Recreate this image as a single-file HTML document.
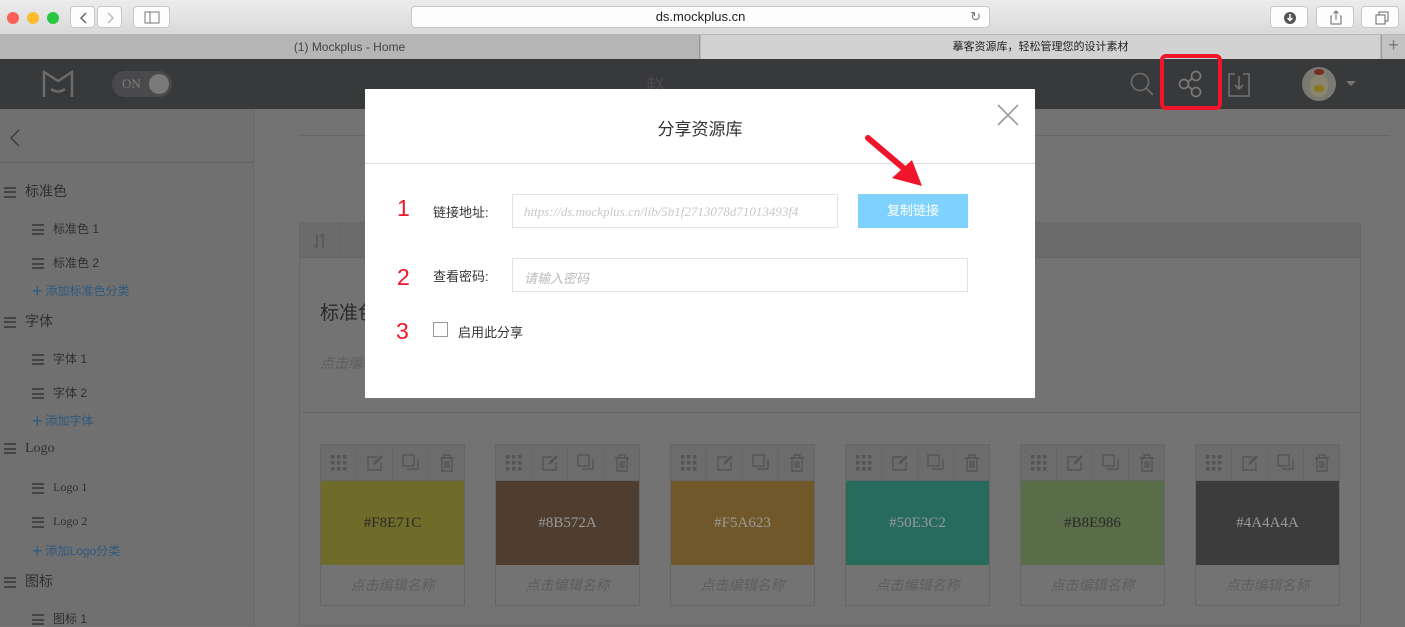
<!DOCTYPE html>
<html><head><meta charset="utf-8"><style>
*{margin:0;padding:0;box-sizing:border-box}
body{width:1405px;height:626px;overflow:hidden;position:relative;background:#737373;font-family:"Liberation Serif","Noto Serif CJK SC",serif}
.abs{position:absolute}
.cjk{font-family:"Liberation Sans","Noto Sans CJK SC",sans-serif}
.chrome{left:0;top:0;width:1405px;height:35px;background:linear-gradient(#ececec,#d9d9d9);border-bottom:1px solid #b8b8b8}
.btn{background:#fdfdfd;border:1px solid #c8c8c8;border-radius:4px;height:22px;top:6px}
.tabs{left:0;top:35px;width:1405px;height:24px;background:#b9b9b9}
.hdr{left:0;top:59px;width:1405px;height:50px;background:#38393b}
.side{left:0;top:109px;width:254px;height:517px;background:#707070;border-right:1px solid #666}
.s1{font-size:14px;color:#303030}
.s2{font-size:12px;color:#303030}
.add{font-size:12px;color:#2e5a80}
.ham{display:inline-block;width:12px;height:11px;border-top:2px solid #444;border-bottom:2px solid #444;position:relative;vertical-align:middle;margin-right:9px}
.ham:after{content:"";position:absolute;left:0;right:0;top:2.5px;border-top:2px solid #444}
.card{width:145px;height:162px;border:1px solid #666;background:#737373}
.ctb{height:36px;background:#6c6c6c;border-bottom:1px solid #666;display:flex}
.ctb div{flex:1;border-right:1px solid #666;display:flex;align-items:center;justify-content:center}
.sw{height:84px;display:flex;align-items:center;justify-content:center;font-size:15px}
.nm{height:40px;display:flex;align-items:center;justify-content:center;font-style:italic;font-size:14px;color:#5e5e5e}
.dlg{left:365px;top:89px;width:670px;height:309px;background:#fff}
.num{color:#f0152b;font-family:"Liberation Sans",sans-serif;font-size:23px}
.lbl{font-size:13px;color:#333}
.inp{border:1px solid #e3e3e3;height:34px;font-style:italic;font-size:13px;color:#c8c8c8;padding:9px 11px;white-space:nowrap;overflow:hidden}
</style></head><body>
<div class="abs chrome"></div>
<div class="abs" style="left:7px;top:12px;width:12px;height:12px;border-radius:50%;background:#fc5f57"></div>
<div class="abs" style="left:27px;top:12px;width:12px;height:12px;border-radius:50%;background:#fdbc2e"></div>
<div class="abs" style="left:47px;top:12px;width:12px;height:12px;border-radius:50%;background:#29c840"></div>
<div class="abs btn" style="left:70px;width:25px"><svg width="25" height="22"><path d="M15 6l-5 5 5 5" stroke="#666" fill="none" stroke-width="1.5"/></svg></div>
<div class="abs btn" style="left:97px;width:25px"><svg width="25" height="22"><path d="M10 6l5 5-5 5" stroke="#bbb" fill="none" stroke-width="1.5"/></svg></div>
<div class="abs btn" style="left:133px;width:37px"><svg width="37" height="22"><rect x="11" y="5" width="14" height="11" stroke="#777" fill="none"/><line x1="16" y1="5" x2="16" y2="16" stroke="#777"/></svg></div>
<div class="abs btn" style="left:411px;width:579px;text-align:center;font:13px 'Liberation Sans',sans-serif;line-height:20px;color:#222">ds.mockplus.cn<span class="abs" style="right:8px;top:0;color:#777">↻</span></div>
<div class="abs btn" style="left:1270px;width:38px"><svg width="38" height="22"><circle cx="19" cy="11" r="6" fill="#555"/><path d="M19 7v6M16.5 11l2.5 2.5 2.5-2.5" stroke="#fff" fill="none" stroke-width="1.5"/></svg></div>
<div class="abs btn" style="left:1316px;width:38px"><svg width="38" height="22"><path d="M15 9h-1v8h10V9h-1M19 4v9M16.5 6.5L19 4l2.5 2.5" stroke="#666" fill="none"/></svg></div>
<div class="abs btn" style="left:1361px;width:38px"><svg width="38" height="22"><rect x="14" y="8" width="9" height="9" stroke="#666" fill="none"/><path d="M17 8V5h9v9h-3" stroke="#666" fill="none"/></svg></div>
<div class="abs tabs"></div>
<div class="abs" style="left:0;top:35px;width:700px;height:24px;background:#b5b5b5;border-right:1px solid #999;font:12px 'Liberation Sans',sans-serif;color:#444;text-align:center;line-height:24px">(1) Mockplus - Home</div>
<div class="abs cjk" style="left:701px;top:35px;width:679px;height:24px;background:#d2d2d2;font-size:11px;color:#222;text-align:center;line-height:24px">摹客资源库，轻松管理您的设计素材</div>
<div class="abs" style="left:1381px;top:35px;width:24px;height:24px;background:#c2c2c2;border-left:1px solid #999;color:#777;text-align:center;line-height:22px;font:18px 'Liberation Sans',sans-serif">+</div>
<div class="abs hdr"></div>
<svg class="abs" style="left:42px;top:70px" width="32" height="28"><path d="M2 27V2l14 9 14-9v25" stroke="#6b6b6b" stroke-width="2.5" fill="none"/><path d="M9 19q7 5 14 0" stroke="#6b6b6b" stroke-width="2.5" fill="none"/></svg>
<div class="abs" style="left:112px;top:71px;width:60px;height:26px;border-radius:13px;background:#4a4a4c;color:#7d7d7d;font-size:13px;line-height:26px;padding-left:10px">ON<span class="abs" style="right:3px;top:3px;width:20px;height:20px;border-radius:50%;background:#7a7a7a"></span></div>
<div class="abs cjk" style="left:646px;top:71px;font-size:19px;color:#4b4b4d">赵</div>
<svg class="abs" style="left:1128px;top:70px" width="30" height="28"><circle cx="12" cy="12" r="8.5" stroke="#6d6d6d" stroke-width="1.6" fill="none"/><path d="M18 18l7 7" stroke="#6d6d6d" stroke-width="1.6"/></svg>
<div class="abs" style="left:1160px;top:54px;width:62px;height:56px;border:4px solid #f0152b;border-radius:6px"></div>
<svg class="abs" style="left:1176px;top:70px" width="30" height="30"><circle cx="8" cy="14" r="4.5" stroke="#7a7a7a" stroke-width="1.7" fill="none"/><circle cx="20" cy="6" r="4.5" stroke="#7a7a7a" stroke-width="1.7" fill="none"/><circle cx="20" cy="22" r="4.5" stroke="#7a7a7a" stroke-width="1.7" fill="none"/><path d="M12 12l4-3.5M12 16l4 3.5" stroke="#7a7a7a" stroke-width="1.7"/></svg>
<svg class="abs" style="left:1227px;top:72px" width="26" height="26"><path d="M8 2H2v22h20V2h-6M12 4v13M8 13l4 4 4-4" stroke="#727272" stroke-width="1.6" fill="none"/></svg>
<div class="abs" style="left:1302px;top:67px;width:34px;height:34px;border-radius:50%;background:#7a7a72;overflow:hidden"><div class="abs" style="left:8px;top:8px;width:18px;height:22px;border-radius:45%;background:#8a8570"></div><div class="abs" style="left:12px;top:18px;width:10px;height:7px;border-radius:40%;background:#8a7a1e"></div><div class="abs" style="left:12px;top:2px;width:10px;height:6px;border-radius:50%;background:#7a2a20"></div></div>
<div class="abs" style="left:1346px;top:81px;border:5px solid transparent;border-top:5px solid #777"></div>

<div class="abs side"></div>
<svg class="abs" style="left:8px;top:128px" width="14" height="20"><path d="M11 2L3 10l8 8" stroke="#3f3f3f" stroke-width="1.5" fill="none"/></svg>
<div class="abs" style="left:0;top:162px;width:253px;border-top:1px solid #626262"></div>
<div class="abs s1 cjk" style="left:4px;top:181px"><span class="ham"></span>标准色</div>
<div class="abs s2 cjk" style="left:32px;top:220px"><span class="ham"></span>标准色 1</div>
<div class="abs s2 cjk" style="left:32px;top:254px"><span class="ham"></span>标准色 2</div>
<div class="abs add cjk" style="left:32px;top:282px"><span style="font-size:18px;line-height:14px;vertical-align:-2px;margin-right:3px">+</span>添加标准色分类</div>
<div class="abs s1 cjk" style="left:4px;top:311px"><span class="ham"></span>字体</div>
<div class="abs s2 cjk" style="left:32px;top:350px"><span class="ham"></span>字体 1</div>
<div class="abs s2 cjk" style="left:32px;top:384px"><span class="ham"></span>字体 2</div>
<div class="abs add cjk" style="left:32px;top:412px"><span style="font-size:18px;line-height:14px;vertical-align:-2px;margin-right:3px">+</span>添加字体</div>
<div class="abs s1" style="left:4px;top:441px"><span class="ham"></span>Logo</div>
<div class="abs s2" style="left:32px;top:480px"><span class="ham"></span>Logo 1</div>
<div class="abs s2" style="left:32px;top:514px"><span class="ham"></span>Logo 2</div>
<div class="abs add cjk" style="left:32px;top:542px"><span style="font-size:18px;line-height:14px;vertical-align:-2px;margin-right:3px">+</span>添加Logo分类</div>
<div class="abs s1 cjk" style="left:4px;top:571px"><span class="ham"></span>图标</div>
<div class="abs s2 cjk" style="left:32px;top:610px"><span class="ham"></span>图标 1</div>

<div class="abs" style="left:300px;top:135px;width:1090px;border-top:1px solid #666"></div>
<div class="abs" style="left:299px;top:222px;width:1062px;height:404px;border:1px solid #686868;background:#737373"></div>
<div class="abs" style="left:300px;top:223px;width:1060px;height:35px;background:#6b6b6b;border-bottom:1px solid #666"></div>
<div class="abs" style="left:340px;top:223px;height:35px;border-left:1px solid #666"></div>
<svg class="abs" style="left:310px;top:232px" width="20" height="18"><path d="M7 2v14M4 13l3 3M13 16V2M10 5l3-3" stroke="#555" stroke-width="1.4" fill="none"/></svg>
<div class="abs cjk" style="left:320px;top:298px;font-size:19px;color:#2a2a2a">标准色</div>
<div class="abs cjk" style="left:320px;top:353px;font-size:14px;color:#5e5e5e;font-style:italic">点击编辑</div>
<div class="abs" style="left:300px;top:412px;width:1060px;border-top:1px solid #666"></div>

<!-- cards -->
<div class="abs card" style="left:320px;top:444px"><div class="ctb"><div><svg width="16" height="16"><g fill="#555"><rect x="0" y="0" width="3.5" height="3.5"/><rect x="6" y="0" width="3.5" height="3.5"/><rect x="12" y="0" width="3.5" height="3.5"/><rect x="0" y="6" width="3.5" height="3.5"/><rect x="6" y="6" width="3.5" height="3.5"/><rect x="12" y="6" width="3.5" height="3.5"/><rect x="0" y="12" width="3.5" height="3.5"/><rect x="6" y="12" width="3.5" height="3.5"/><rect x="12" y="12" width="3.5" height="3.5"/></g></svg></div><div><svg width="16" height="16"><path d="M10 2H1v13h13V7" stroke="#555" stroke-width="1.4" fill="none"/><path d="M6 10l1-3 7-7 2 2-7 7z" fill="#555"/></svg></div><div><svg width="17" height="17"><rect x="1" y="1" width="11" height="11" stroke="#555" stroke-width="1.4" fill="none"/><path d="M5 15h11V5" stroke="#555" stroke-width="1.4" fill="none"/></svg></div><div style="border:0"><svg width="16" height="18"><path d="M1 4h14M5 4V1h6v3M3 4v13h10V4M6 7v7M8 7v7M10 7v7" stroke="#555" stroke-width="1.4" fill="none"/></svg></div></div><div class="sw" style="background:#6f6b28;color:#2a2a2a">#F8E71C</div><div class="nm cjk">点击编辑名称</div></div>
<div class="abs card" style="left:495px;top:444px"><div class="ctb"><div><svg width="16" height="16"><g fill="#555"><rect x="0" y="0" width="3.5" height="3.5"/><rect x="6" y="0" width="3.5" height="3.5"/><rect x="12" y="0" width="3.5" height="3.5"/><rect x="0" y="6" width="3.5" height="3.5"/><rect x="6" y="6" width="3.5" height="3.5"/><rect x="12" y="6" width="3.5" height="3.5"/><rect x="0" y="12" width="3.5" height="3.5"/><rect x="6" y="12" width="3.5" height="3.5"/><rect x="12" y="12" width="3.5" height="3.5"/></g></svg></div><div><svg width="16" height="16"><path d="M10 2H1v13h13V7" stroke="#555" stroke-width="1.4" fill="none"/><path d="M6 10l1-3 7-7 2 2-7 7z" fill="#555"/></svg></div><div><svg width="17" height="17"><rect x="1" y="1" width="11" height="11" stroke="#555" stroke-width="1.4" fill="none"/><path d="M5 15h11V5" stroke="#555" stroke-width="1.4" fill="none"/></svg></div><div style="border:0"><svg width="16" height="18"><path d="M1 4h14M5 4V1h6v3M3 4v13h10V4M6 7v7M8 7v7M10 7v7" stroke="#555" stroke-width="1.4" fill="none"/></svg></div></div><div class="sw" style="background:#4f3e2f;color:#9a9a9a">#8B572A</div><div class="nm cjk">点击编辑名称</div></div>
<div class="abs card" style="left:670px;top:444px"><div class="ctb"><div><svg width="16" height="16"><g fill="#555"><rect x="0" y="0" width="3.5" height="3.5"/><rect x="6" y="0" width="3.5" height="3.5"/><rect x="12" y="0" width="3.5" height="3.5"/><rect x="0" y="6" width="3.5" height="3.5"/><rect x="6" y="6" width="3.5" height="3.5"/><rect x="12" y="6" width="3.5" height="3.5"/><rect x="0" y="12" width="3.5" height="3.5"/><rect x="6" y="12" width="3.5" height="3.5"/><rect x="12" y="12" width="3.5" height="3.5"/></g></svg></div><div><svg width="16" height="16"><path d="M10 2H1v13h13V7" stroke="#555" stroke-width="1.4" fill="none"/><path d="M6 10l1-3 7-7 2 2-7 7z" fill="#555"/></svg></div><div><svg width="17" height="17"><rect x="1" y="1" width="11" height="11" stroke="#555" stroke-width="1.4" fill="none"/><path d="M5 15h11V5" stroke="#555" stroke-width="1.4" fill="none"/></svg></div><div style="border:0"><svg width="16" height="18"><path d="M1 4h14M5 4V1h6v3M3 4v13h10V4M6 7v7M8 7v7M10 7v7" stroke="#555" stroke-width="1.4" fill="none"/></svg></div></div><div class="sw" style="background:#71582a;color:#9a9a9a">#F5A623</div><div class="nm cjk">点击编辑名称</div></div>
<div class="abs card" style="left:845px;top:444px"><div class="ctb"><div><svg width="16" height="16"><g fill="#555"><rect x="0" y="0" width="3.5" height="3.5"/><rect x="6" y="0" width="3.5" height="3.5"/><rect x="12" y="0" width="3.5" height="3.5"/><rect x="0" y="6" width="3.5" height="3.5"/><rect x="6" y="6" width="3.5" height="3.5"/><rect x="12" y="6" width="3.5" height="3.5"/><rect x="0" y="12" width="3.5" height="3.5"/><rect x="6" y="12" width="3.5" height="3.5"/><rect x="12" y="12" width="3.5" height="3.5"/></g></svg></div><div><svg width="16" height="16"><path d="M10 2H1v13h13V7" stroke="#555" stroke-width="1.4" fill="none"/><path d="M6 10l1-3 7-7 2 2-7 7z" fill="#555"/></svg></div><div><svg width="17" height="17"><rect x="1" y="1" width="11" height="11" stroke="#555" stroke-width="1.4" fill="none"/><path d="M5 15h11V5" stroke="#555" stroke-width="1.4" fill="none"/></svg></div><div style="border:0"><svg width="16" height="18"><path d="M1 4h14M5 4V1h6v3M3 4v13h10V4M6 7v7M8 7v7M10 7v7" stroke="#555" stroke-width="1.4" fill="none"/></svg></div></div><div class="sw" style="background:#266b5b;color:#9a9a9a">#50E3C2</div><div class="nm cjk">点击编辑名称</div></div>
<div class="abs card" style="left:1020px;top:444px"><div class="ctb"><div><svg width="16" height="16"><g fill="#555"><rect x="0" y="0" width="3.5" height="3.5"/><rect x="6" y="0" width="3.5" height="3.5"/><rect x="12" y="0" width="3.5" height="3.5"/><rect x="0" y="6" width="3.5" height="3.5"/><rect x="6" y="6" width="3.5" height="3.5"/><rect x="12" y="6" width="3.5" height="3.5"/><rect x="0" y="12" width="3.5" height="3.5"/><rect x="6" y="12" width="3.5" height="3.5"/><rect x="12" y="12" width="3.5" height="3.5"/></g></svg></div><div><svg width="16" height="16"><path d="M10 2H1v13h13V7" stroke="#555" stroke-width="1.4" fill="none"/><path d="M6 10l1-3 7-7 2 2-7 7z" fill="#555"/></svg></div><div><svg width="17" height="17"><rect x="1" y="1" width="11" height="11" stroke="#555" stroke-width="1.4" fill="none"/><path d="M5 15h11V5" stroke="#555" stroke-width="1.4" fill="none"/></svg></div><div style="border:0"><svg width="16" height="18"><path d="M1 4h14M5 4V1h6v3M3 4v13h10V4M6 7v7M8 7v7M10 7v7" stroke="#555" stroke-width="1.4" fill="none"/></svg></div></div><div class="sw" style="background:#586d48;color:#2a2a2a">#B8E986</div><div class="nm cjk">点击编辑名称</div></div>
<div class="abs card" style="left:1195px;top:444px"><div class="ctb"><div><svg width="16" height="16"><g fill="#555"><rect x="0" y="0" width="3.5" height="3.5"/><rect x="6" y="0" width="3.5" height="3.5"/><rect x="12" y="0" width="3.5" height="3.5"/><rect x="0" y="6" width="3.5" height="3.5"/><rect x="6" y="6" width="3.5" height="3.5"/><rect x="12" y="6" width="3.5" height="3.5"/><rect x="0" y="12" width="3.5" height="3.5"/><rect x="6" y="12" width="3.5" height="3.5"/><rect x="12" y="12" width="3.5" height="3.5"/></g></svg></div><div><svg width="16" height="16"><path d="M10 2H1v13h13V7" stroke="#555" stroke-width="1.4" fill="none"/><path d="M6 10l1-3 7-7 2 2-7 7z" fill="#555"/></svg></div><div><svg width="17" height="17"><rect x="1" y="1" width="11" height="11" stroke="#555" stroke-width="1.4" fill="none"/><path d="M5 15h11V5" stroke="#555" stroke-width="1.4" fill="none"/></svg></div><div style="border:0"><svg width="16" height="18"><path d="M1 4h14M5 4V1h6v3M3 4v13h10V4M6 7v7M8 7v7M10 7v7" stroke="#555" stroke-width="1.4" fill="none"/></svg></div></div><div class="sw" style="background:#3c3c3c;color:#9a9a9a">#4A4A4A</div><div class="nm cjk">点击编辑名称</div></div>

<!-- dialog -->
<div class="abs dlg">
  <div class="abs cjk" style="left:0;width:670px;top:26px;text-align:center;font-size:17px;color:#333">分享资源库</div>
  <svg class="abs" style="left:632px;top:15px" width="22" height="22"><path d="M1 1l20 20M21 1L1 21" stroke="#999" stroke-width="1.6"/></svg>
  <div class="abs" style="left:0;top:74px;width:670px;border-top:1px solid #ddd"></div>
  <div class="abs num" style="left:32px;top:106px">1</div>
  <div class="abs lbl cjk" style="left:68px;top:113px">链接地址:</div>
  <div class="abs inp" style="left:147px;top:105px;width:326px">https://ds.mockplus.cn/lib/5b1f2713078d71013493f4</div>
  <div class="abs cjk" style="left:493px;top:105px;width:110px;height:34px;background:#7fd2fd;color:#fff;font-size:13px;text-align:center;line-height:34px">复制链接</div>
  <div class="abs num" style="left:32px;top:175px">2</div>
  <div class="abs lbl cjk" style="left:68px;top:177px">查看密码:</div>
  <div class="abs inp cjk" style="left:147px;top:169px;width:456px;color:#bbb">请输入密码</div>
  <div class="abs num" style="left:31px;top:229px">3</div>
  <div class="abs" style="left:68px;top:233px;width:15px;height:15px;border:1px solid #999"></div>
  <div class="abs lbl cjk" style="left:93px;top:233px">启用此分享</div>
</div>
<!-- red arrow -->
<svg class="abs" style="left:862px;top:132px" width="66" height="58"><path d="M6 6l40 34" stroke="#f0152b" stroke-width="6" stroke-linecap="round"/><path d="M60 54L30 46 50 28z" fill="#f0152b"/></svg>
</body></html>
